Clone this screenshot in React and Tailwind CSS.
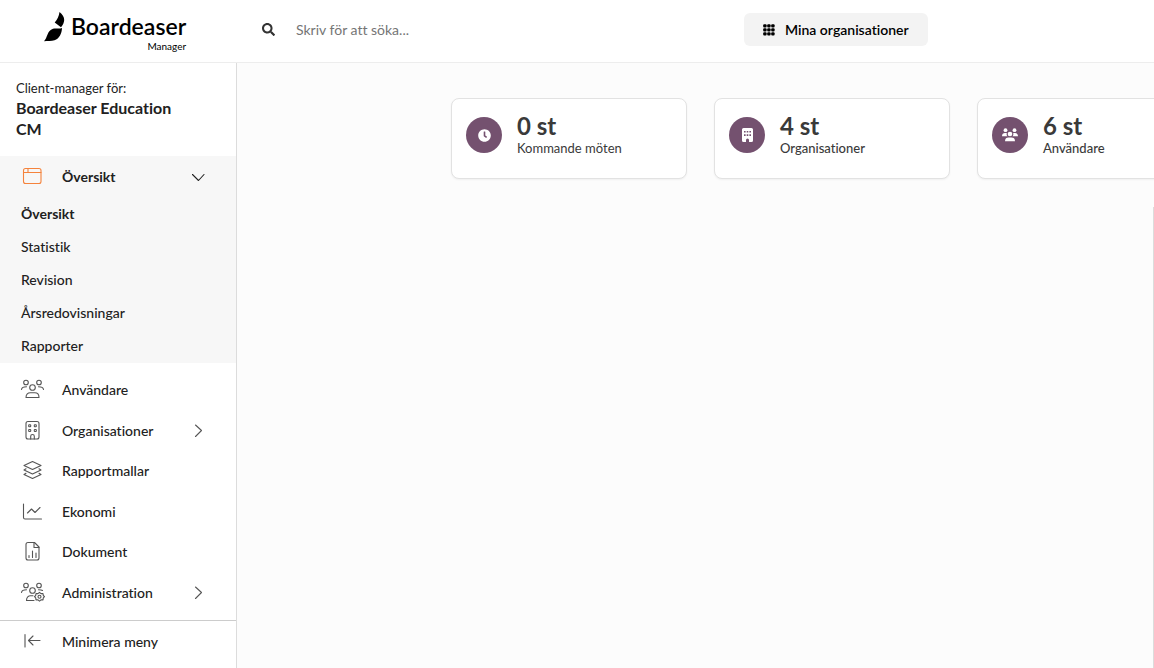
import { FaSearch, FaClock } from 'react-icons/fa';

const sections = [
    { label: 'Användare', icon: 'users' },
    { label: 'Organisationer', icon: 'building', expandable: true },
    { label: 'Rapportmallar', icon: 'layers' },
    { label: 'Ekonomi', icon: 'chart' },
    { label: 'Dokument', icon: 'file' },
    { label: 'Administration', icon: 'admin', expandable: true },
];

const overview = ['Översikt', 'Statistik', 'Revision', 'Årsredovisningar', 'Rapporter'];

const stats = [
    { value: '0 st', label: 'Kommande möten', icon: 'clock', labelClass: 'font-normal' },
    { value: '4 st', label: 'Organisationer', icon: 'building', labelClass: 'font-medium' },
    { value: '6 st', label: 'Användare', icon: 'users', labelClass: 'font-medium' },
];

const shapes = {
    window: (
        <>
            <rect x="2.5" y="2.5" width="17.5" height="15" rx="2" />
            <path d="M2.5 6.500h17.5M7 2.700v3.800" />
        </>
    ),
    users: (
        <>
            <circle cx="5" cy="3.5" r="2.3" />
            <circle cx="18" cy="3.5" r="2.3" />
            <circle cx="11.5" cy="8.5" r="2.8" />
            <path d="M.5 10.500C.8 8.500 2 7.800 5.500 7.800M22.500 10.500c-.3-2-1.500-2.700-5-2.700M5 18.500c0-3.200 2-4.700 4.200-4.700h4.600c2.200 0 4.200 1.500 4.200 4.700z" />
        </>
    ),
    building: (
        <>
            <rect x="5" y="1.500" width="13" height="17.500" rx="2" />
            <path d="M9.700 19v-2.700a1.800 1.800 0 0 1 3.600 0V19" />
            <rect x="7.700" y="4.700" width="2" height="2" rx=".5" />
            <rect x="13.300" y="4.700" width="2" height="2" rx=".5" />
            <rect x="7.700" y="9.500" width="2" height="2" rx=".5" />
            <rect x="13.300" y="9.500" width="2" height="2" rx=".5" />
        </>
    ),
    layers: (
        <>
            <path d="M11.500 1.500l8.500 4-8.500 4-8.500-4z" />
            <path d="M5 8.800l-2 1.200 8.500 4 8.500-4-2-1.200M5 13.300l-2 1.200 8.500 4 8.500-4-2-1.200" />
        </>
    ),
    chart: <path d="M2.500 3v13.500A1.500 1.500 0 0 0 4 18h16.500M6.500 12l4-4 3.500 3.500 5-5" />,
    file: (
        <>
            <path d="M7 1.500h6.500l4.500 4.500V17a2 2 0 0 1-2 2H7a2 2 0 0 1-2-2V3.500a2 2 0 0 1 2-2z" />
            <path d="M13 1.500V6.500h5M8 14.500v2M11.500 10v6.500M15 12v4.500" />
        </>
    ),
    admin: (
        <>
            <circle cx="5" cy="3.500" r="2.300" />
            <circle cx="18" cy="3.500" r="2.300" />
            <circle cx="11.500" cy="8.500" r="2.800" />
            <path d="M.5 10.500C.8 8.500 2 7.800 5.500 7.800M21.500 8.500c-.8-.6-2-.7-4-.7M13 18.500H5.500c0-3.200 2-4.700 4-4.700H12" />
            <path d="M18.500 10.300l1.500 1.300 2-.1.300 2 1.200 1.200-1.200 1.200-.3 2-2-.1-1.500 1.300-1.500-1.300-2 .1-.3-2-1.200-1.200 1.200-1.200.3-2 2 .1z" />
            <circle cx="18.500" cy="14.700" r="1.500" />
        </>
    ),
    collapse: <path d="M4 3.500v12.500M7.500 9.500h11.500M12 5l-4.500 4.500L12 14" />,
};

const LineIcon = ({ name, className }) => (
    <svg viewBox="0 0 23 22" fill="none" stroke="currentColor" strokeWidth="1.1" strokeLinecap="round" strokeLinejoin="round" className={`w-[23px] h-[22px] overflow-visible ${className}`}>
        {shapes[name]}
    </svg>
);

const Chevron = ({ className }) => (
    <svg viewBox="0 0 14 14" fill="none" stroke="currentColor" strokeWidth="1.1" strokeLinecap="round" strokeLinejoin="round" className={`w-3.5 h-3.5 ${className}`}>
        <path d="M4.500 1l6 5.500-6 6" />
    </svg>
);

const Dots = () => (
    <svg viewBox="0 0 12 12" className="w-3 h-3" fill="currentColor">
        {[0, 4, 8].map((y) => [0, 4, 8].map((x) => (
            <rect key={`${x}-${y}`} x={x + 0.2} y={y + 0.2} width="3.4" height="3.4" rx="1" />
        )))}
    </svg>
);

const StatIcon = ({ name }) => {
    if (name === 'clock') return <FaClock className="w-[13px] h-[13px]" />;
    if (name === 'building') {
        return (
            <svg viewBox="0 0 11 14" className="w-[11px] h-3.5" fill="currentColor" fillRule="evenodd">
                <path d="M1.500 0h8A1.500 1.500 0 0 1 11 1.500v11A1.500 1.500 0 0 1 9.500 14H7v-2a1.500 1.500 0 0 0-3 0v2H1.500A1.500 1.500 0 0 1 0 12.500v-11A1.500 1.500 0 0 1 1.500 0zM2 3v1.600h1.600V3zM4.700 3v1.600h1.600V3zM7.400 3v1.600H9V3zM2 6.300v1.600h1.600V6.300zM4.700 6.300v1.600h1.600V6.300zM7.400 6.300v1.600H9V6.300z" />
            </svg>
        );
    }
    return (
        <svg viewBox="0 0 16 14" className="w-4 h-3.5" fill="currentColor">
            <circle cx="3.500" cy="2.200" r="1.900" />
            <circle cx="12.500" cy="2.200" r="1.900" />
            <circle cx="8" cy="6" r="2.300" />
            <path d="M0 8.300C0 6 1.300 5 3 5h1.800c-.4 1.500 0 2.500.6 3.300zM16 8.300C16 6 14.700 5 13 5h-1.800c.4 1.500 0 2.500-.6 3.300zM3 13.300C3 10.500 4.500 9.500 6.500 9.500h3c2 0 3.500 1 3.500 3.800z" />
        </svg>
    );
};

const Header = () => (
    <header className="h-[63px] shrink-0 flex items-center pb-[3px] bg-white border-b border-[#ededed]">
        <a href="#" className="w-[237px] shrink-0 flex pt-1 pl-11 text-black">
            <svg viewBox="0 0 22 30" className="w-[22px] h-[30px]" fill="currentColor">
                <path d="M15.500 0c2.800 2.300 4.800 5 4.700 8-.1 2.500-1.200 5-3.200 7.200L10.700 10.500C13.300 7.500 15 4.500 15.500 0z" />
                <path d="M18 16c-.2 5.500-2.500 10.500-7.500 12.300-3 1-7 .6-10.500 1C3.500 26 3 18.500 9 16.800c3-.7 6.500.4 9-.8z" />
            </svg>
            <span className="flex flex-col items-end ml-[5px]">
                <span className="text-[23px] leading-7 font-semibold">Boardeaser</span>
                <span className="text-[10px] leading-3">Manager</span>
            </span>
        </a>
        <label className="flex items-center gap-[21px] pl-[25px] w-[507px]">
            <FaSearch className="w-[13px] h-[13px] text-[#333]" />
            <input type="search" aria-label="Sök" placeholder="Skriv för att söka..." className="flex-1 outline-none text-sm placeholder:text-[#757575]" />
        </label>
        <button className="h-[33px] px-[19px] flex items-center gap-2.5 rounded-md bg-[#f3f3f3] text-sm font-semibold text-black">
            <Dots />
            Mina organisationer
        </button>
    </header>
);

const Sidebar = () => (
    <aside className="w-[237px] shrink-0 flex flex-col bg-white border-r border-[#dcdcdc] text-[#212121]">
        <div className="px-4 pt-4 pb-[17px]">
            <div className="text-[13px] leading-[18px]">Client-manager för:</div>
            <div className="w-44 text-base leading-[21px] font-bold">Boardeaser Education CM</div>
        </div>

        <nav className="flex-1 text-sm font-medium">
            <div className="bg-[#f7f7f7] pb-px">
                <button className="w-full h-[41px] flex items-center pl-[21px] pr-[31px] font-bold">
                    <LineIcon name="window" className="text-[#f5833c]" />
                    <span className="flex-1 text-left pl-[18px]">Översikt</span>
                    <Chevron className="rotate-90" />
                </button>
                <ul>
                    {overview.map((item, i) => (
                        <li key={item}>
                            <a href="#" className={`h-[33px] flex items-center pl-[21px] ${i === 0 ? 'font-bold' : ''}`}>{item}</a>
                        </li>
                    ))}
                </ul>
            </div>

            <div className="mt-[7px] h-[243px] grid grid-rows-6">
                {sections.map((item) => (
                    <button key={item.label} className="w-full flex items-center pl-[21px] pr-[31px]">
                        <LineIcon name={item.icon} className="text-[#555]" />
                        <span className="flex-1 text-left pl-[18px]">{item.label}</span>
                        {item.expandable && <Chevron className="text-[#555]" />}
                    </button>
                ))}
            </div>
        </nav>

        <button className="h-12 flex items-center pl-[21px] pb-1.5 border-t border-[#ccc] text-sm font-medium">
            <LineIcon name="collapse" className="text-[#555]" />
            <span className="pl-[18px]">Minimera meny</span>
        </button>
    </aside>
);

const App = () => (
    <div className="h-screen flex flex-col overflow-hidden bg-[#fcfcfc] font-['Lato',sans-serif] [font-variant-ligatures:none]">
        <Header />
        <div className="flex-1 min-h-0 flex">
            <Sidebar />
            <main className="flex-1 min-w-0 overflow-hidden pl-[214px] pt-[35px]">
                <div className="flex gap-[27px]">
                    {stats.map((stat) => (
                        <section key={stat.label} className="w-[236px] h-[81px] shrink-0 flex items-start pl-3.5 pt-[13px] gap-[15px] bg-white border border-[#e2e2e2] rounded-lg shadow-xs text-[#3a3a3a]">
                            <span className="w-9 h-9 mt-[5px] rounded-full bg-[#74516f] text-white flex items-center justify-center">
                                <StatIcon name={stat.icon} />
                            </span>
                            <div>
                                <div className="text-2xl leading-7 font-bold">{stat.value}</div>
                                <div className={`text-[13px] leading-4 ${stat.labelClass}`}>{stat.label}</div>
                            </div>
                        </section>
                    ))}
                </div>
                <div className="h-full mt-7 border-r border-[#dcdcdc]" />
            </main>
        </div>
    </div>
);

export default App;
